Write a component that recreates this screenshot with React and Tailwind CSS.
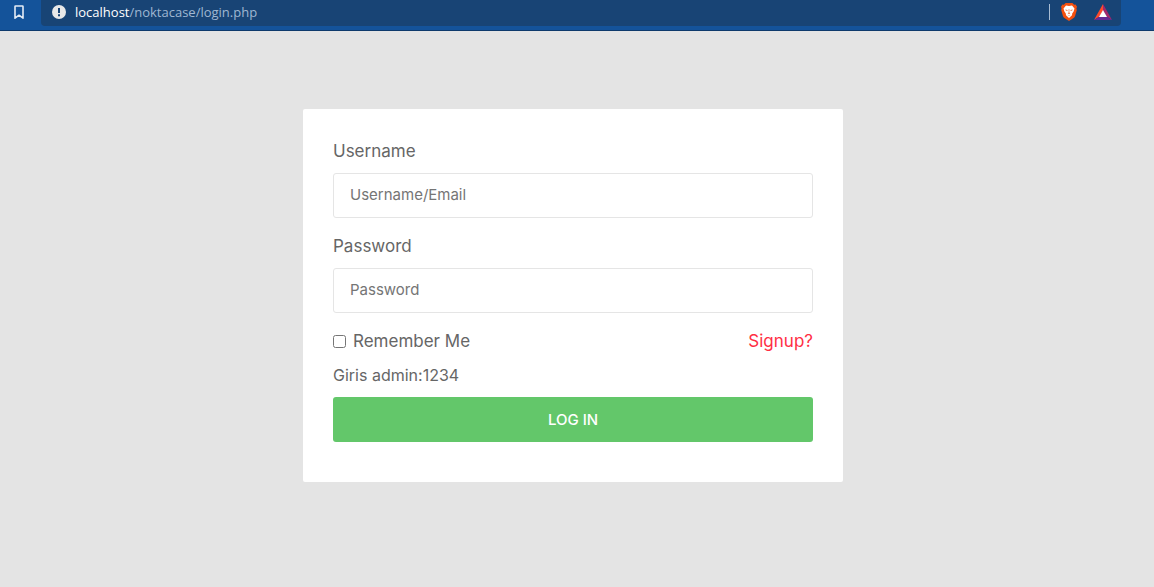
function BookmarkIcon() {
  return (
    <svg width="10" height="15" viewBox="0 0 10 15" fill="none" aria-hidden="true">
      <path d="M1 1.5Q1 1 1.5 1H8.5Q9 1 9 1.5V13.2L5 10.2L1 13.2Z" stroke="#e4ecf5" strokeWidth="1.6" strokeLinejoin="round" />
    </svg>
  );
}

function InfoIcon() {
  return (
    <svg width="14" height="14" viewBox="0 0 14 14" aria-hidden="true">
      <circle cx="7" cy="7" r="7" fill="#e8e8e8" />
      <path d="M6 3H8V8H6ZM6 9.2H8V11.2H6Z" fill="#184475" />
    </svg>
  );
}

function BraveIcon() {
  return (
    <svg width="16" height="18" viewBox="0 0 16 18" aria-hidden="true">
      <path d="M4.6 0H11.4L13.2 1.8L14.6 1.6L16 3.8L15.4 5.6L15.8 7L14 13.2Q13.6 14.4 12.6 15.1L8.8 17.6Q8 18.1 7.2 17.6L3.4 15.1Q2.4 14.4 2 13.2L0.2 7L0.6 5.6L0 3.8L1.4 1.6L2.8 1.8Z" fill="#f4500f" />
      <path d="M5 2.6L8 3.1L11 2.6L13.5 5.6L12.6 8.5L11.2 10.4L11 12.2L8 15L5 12.2L4.8 10.4L3.4 8.5L2.5 5.6Z" fill="#fff" />
      <path d="M4.2 6.4L6.6 7L6.3 7.9L4.8 7.4ZM11.8 6.4L9.4 7L9.7 7.9L11.2 7.4ZM7.7 6H8.3V9.4L9.3 10.3L8 11.3L6.7 10.3L7.7 9.4ZM6 11.6L8 12.6L10 11.6L8 13.1Z" fill="#f4703c" />
    </svg>
  );
}

function RewardsIcon() {
  return (
    <svg width="18" height="16" viewBox="0 0 18 16" aria-hidden="true">
      <path d="M9 0L0 16L5.5 12.5L9 6.5Z" fill="#ff4a2a" />
      <path d="M9 0L18 16L12.5 12.5L9 6.5Z" fill="#a2296b" />
      <path d="M0 16H18L12.5 12.5H5.5Z" fill="#642b94" />
      <path d="M9 6L13 13H5Z" fill="#fff" />
    </svg>
  );
}

function BrowserBar() {
  return (
    <header className="flex items-start border-b border-[#0e3a6c] bg-[#14539a] pb-1">
      <button type="button" aria-label="Bookmark this page" className="flex h-6 w-[41px] shrink-0 items-center justify-center pr-1">
        <BookmarkIcon />
      </button>
      <div className="mr-[33px] flex h-[26px] flex-1 items-start rounded-b bg-[#184475] pr-[9px] pl-[11px]">
        <div className="flex h-6 flex-1 items-center gap-[9px]">
          <InfoIcon />
          <p className="font-['Open_Sans','Noto_Sans',sans-serif] text-[13px] leading-5 text-[#9fb7d2]">
            <span className="text-white">localhost</span>/noktacase/login.php
          </p>
        </div>
        <div className="flex h-6 items-center">
          <span className="mr-[11px] h-4 w-px bg-[#a9bdd3]" />
          <button type="button" aria-label="Brave Shields" className="mr-[17px]">
            <BraveIcon />
          </button>
          <button type="button" aria-label="Brave Rewards">
            <RewardsIcon />
          </button>
        </div>
      </div>
    </header>
  );
}

function Field({ id, label, type, placeholder }) {
  return (
    <div className="mb-4">
      <label htmlFor={id} className="mb-[10px] block">{label}</label>
      <input
        id={id}
        type={type}
        placeholder={placeholder}
        className="block h-[45px] w-full rounded-[3px] border border-[#e5e5e5] px-4 pb-0.5 text-[15px] placeholder:text-[#757575]"
      />
    </div>
  );
}

export default function App() {
  return (
    <div className="flex min-h-screen flex-col bg-[#e4e4e4]">
      <BrowserBar />
      <main className="flex flex-1 items-start justify-center pt-[78px] pr-2 pb-8">
        <form
          onSubmit={(e) => e.preventDefault()}
          className="w-full max-w-[540px] rounded-xs bg-white px-[30px] pt-[30px] pb-10 font-['Inter','Liberation_Sans',sans-serif] text-[17px] leading-6 text-[#666666]"
        >
          <Field id="username" label="Username" type="text" placeholder="Username/Email" />
          <Field id="password" label="Password" type="password" placeholder="Password" />
          <div className="mb-[10px] flex items-center justify-between">
            <label className="flex items-center gap-[7px]">
              <input type="checkbox" className="size-[13px]" />
              Remember Me
            </label>
            <a href="#signup" className="text-[#ff2e44]">Signup?</a>
          </div>
          <p className="mb-[10px] text-base">Giris admin:1234</p>
          <button type="submit" className="h-[45px] w-full rounded-[3px] bg-[#63c76a] text-[15px] font-medium text-white">
            LOG IN
          </button>
        </form>
      </main>
    </div>
  );
}
